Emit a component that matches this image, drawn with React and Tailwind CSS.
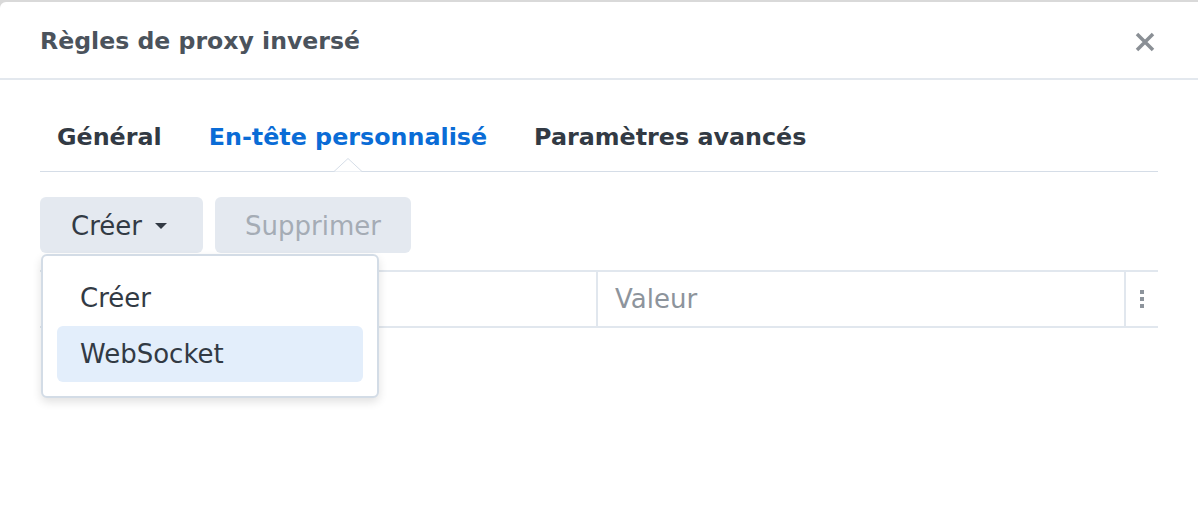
import React from "react";

const sans = { fontFamily: '"DejaVu Sans", Verdana, sans-serif' };

function Tabs() {
  const tabs = ["Général", "En-tête personnalisé", "Paramètres avancés"];
  return (
    <div className="relative mx-10 border-b border-[#d5dde7]">
      <div className="flex h-[91px] items-center gap-[47px] pl-[17px] pt-[23px]">
        {tabs.map((t, i) => (
          <div
            key={t}
            className={`relative text-[23.8px] leading-[32px] font-bold ${i === 1 ? "text-[#0a6cd6]" : "text-[#323a44]"}`}
          >
            {t}
            {i === 1 && (
              <svg
                className="absolute left-1/2 top-[37px] -translate-x-1/2"
                width="28"
                height="14"
                viewBox="0 0 28 14"
              >
                <path d="M0 13.5 L14 0.5 L28 13.5" fill="white" stroke="#d5dde7" strokeWidth="1" />
              </svg>
            )}
          </div>
        ))}
      </div>
    </div>
  );
}

function Toolbar() {
  return (
    <div className="relative mx-10 mt-[25px] flex gap-3">
      <button className="flex h-[56px] w-[163px] items-center gap-[13px] rounded-md bg-[#e4e9f0] pl-[31px] pt-[2px] text-[26px] text-[#323a44]">
        Créer
        <svg width="12" height="7" viewBox="0 0 12 7">
          <path d="M0 0 H12 L6 6 Z" fill="#323a44" />
        </svg>
      </button>
      <button className="flex h-[56px] w-[196px] items-center justify-center rounded-md bg-[#e4e9f0] pt-[2px] text-[26px] text-[#a5acb5]">
        Supprimer
      </button>

      <div className="absolute left-[1px] top-[57px] z-10 w-[338px] rounded-md border-2 border-[#d3dce6] bg-white px-[14px] py-[14px] shadow-[0_4px_10px_rgba(0,0,0,0.12)]">
        <div className="flex h-[56px] items-center rounded-md px-[23px] text-[26px] text-[#323a44]">Créer</div>
        <div className="flex h-[56px] items-center rounded-md bg-[#e3eefb] px-[23px] text-[26px] text-[#323a44]">
          WebSocket
        </div>
      </div>
    </div>
  );
}

function Table() {
  return (
    <div className="mx-10 mt-[17px] flex h-[58px] border-y-2 border-[#e1e7ee]">
      <div className="w-[558px] border-r-2 border-[#e1e7ee]" />
      <div className="flex flex-1 items-center border-r-2 border-[#e1e7ee] pl-[17px] text-[26px] text-[#8d949c]">
        Valeur
      </div>
      <div className="flex w-[32px] items-center justify-center">
        <svg width="4" height="18" viewBox="0 0 4 18">
          <rect x="0" y="0" width="4" height="4" fill="#8d949c" />
          <rect x="0" y="7" width="4" height="4" fill="#8d949c" />
          <rect x="0" y="14" width="4" height="4" fill="#8d949c" />
        </svg>
      </div>
    </div>
  );
}

export default function App() {
  return (
    <div className="h-[512px] w-[1198px] overflow-hidden bg-[#d9d9d9] pt-[2px]" style={sans}>
      <div className="h-full rounded-tl-md bg-white">
        <div className="flex h-[78px] items-center justify-between border-b-2 border-[#e3e8ee] pl-10 pr-[42px] pt-[3px]">
          <div className="text-[23.6px] font-bold text-[#4b535c]">Règles de proxy inversé</div>
          <svg width="22" height="22" viewBox="0 0 22 22">
            <path d="M3 3 L19 19 M19 3 L3 19" stroke="#8a8f95" strokeWidth="3.5" strokeLinecap="butt" />
          </svg>
        </div>
        <Tabs />
        <Toolbar />
        <Table />
      </div>
    </div>
  );
}
